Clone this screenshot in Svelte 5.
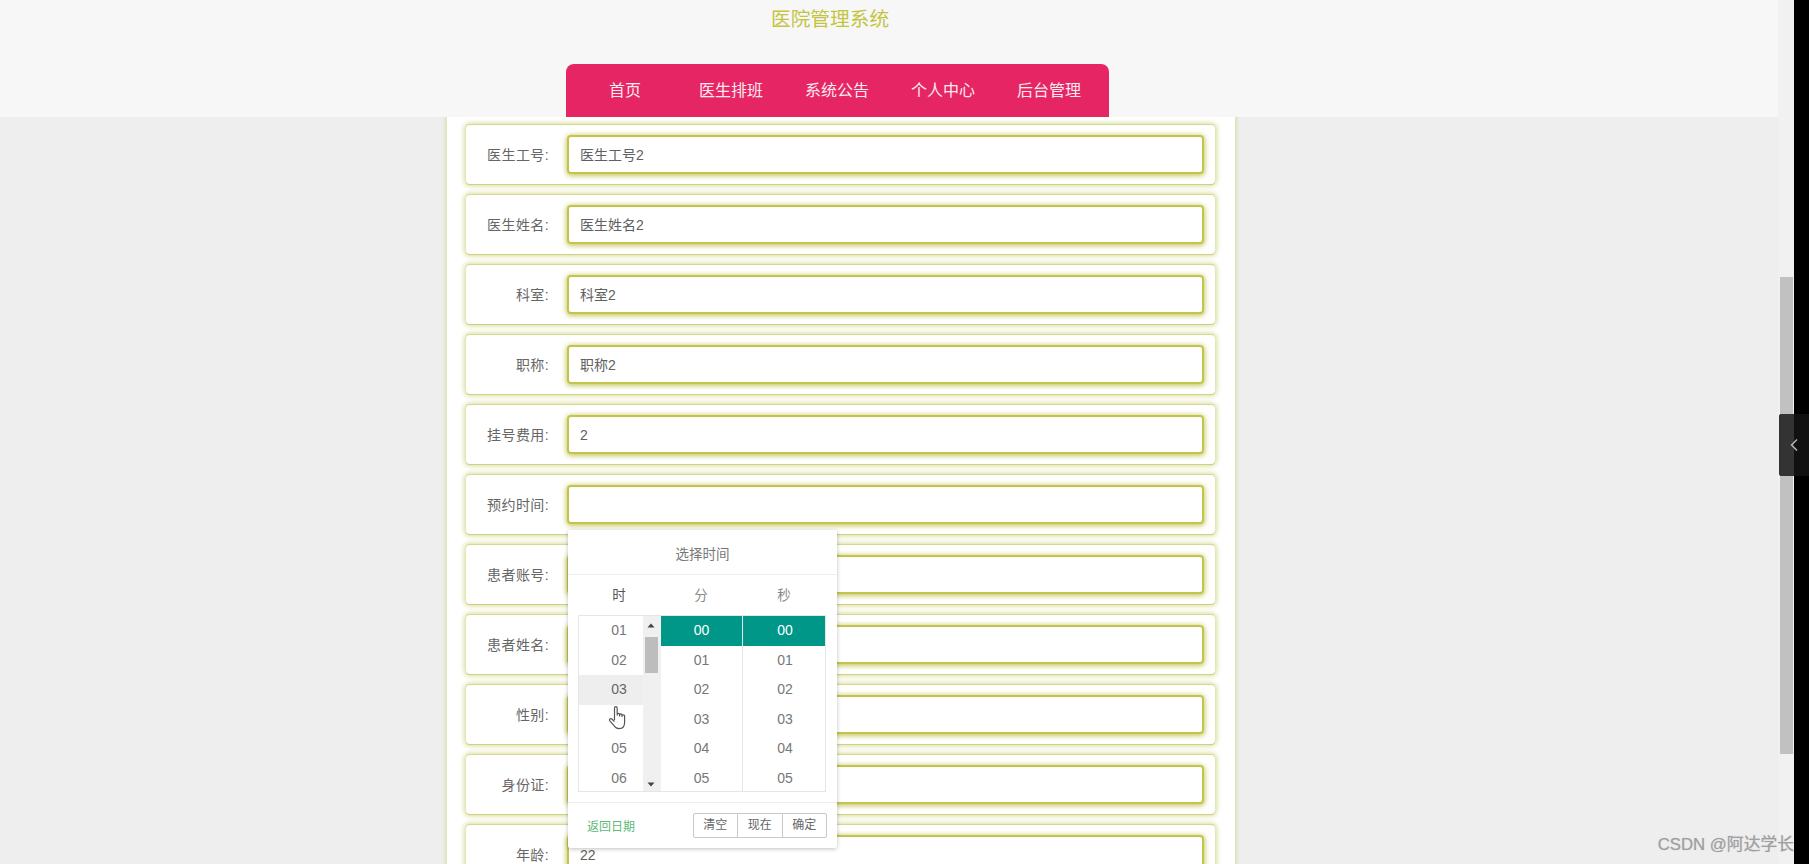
<script>
  const rows = [
    { label: "医生工号", value: "医生工号2" },
    { label: "医生姓名", value: "医生姓名2" },
    { label: "科室", value: "科室2" },
    { label: "职称", value: "职称2" },
    { label: "挂号费用", value: "2" },
    { label: "预约时间", value: "", picker: true },
    { label: "患者账号", value: "" },
    { label: "患者姓名", value: "" },
    { label: "性别", value: "" },
    { label: "身份证", value: "" },
    { label: "年龄", value: "22" },
  ];
  const nav = ["首页", "医生排班", "系统公告", "个人中心", "后台管理"];
  const hours = ["01", "02", "03", "", "05", "06"];
  const minutes = ["00", "01", "02", "03", "04", "05"];
</script>

<div class="page">
  <div class="main">
    <header class="top">
      <div class="title">医院管理系统</div>
      <nav class="nav">
        {#each nav as item}
          <span class="nav-item">{item}</span>
        {/each}
      </nav>
    </header>

    <div class="content">
      <form class="form">
        {#each rows as row}
          <div class="row">
            <span class="label">{row.label}:</span>
            <div class="field">
              <div class="input">{row.value}</div>
              {#if row.picker}
                <div class="picker">
                  <div class="picker-title">选择时间</div>
                  <div class="picker-heads">
                    <span class="strong">时</span>
                    <span>分</span>
                    <span>秒</span>
                  </div>
                  <div class="picker-cols">
                    <div class="col col-hours">
                      <div class="hour-list">
                        {#each hours as h, i}
                          <div class="cell" class:hover={i === 2}>{h}</div>
                        {/each}
                      </div>
                      <div class="mini-bar">
                        <svg class="arrow" width="8" height="5" viewBox="0 0 8 5"><path d="M0.5 4.5L4 0.5L7.5 4.5Z" fill="#444" /></svg>
                        <div class="mini-thumb"></div>
                        <svg class="arrow arrow-down" width="8" height="5" viewBox="0 0 8 5"><path d="M0.5 0.5L4 4.5L7.5 0.5Z" fill="#444" /></svg>
                      </div>
                    </div>
                    <div class="col">
                      {#each minutes as m, i}
                        <div class="cell" class:on={i === 0}>{m}</div>
                      {/each}
                    </div>
                    <div class="col">
                      {#each minutes as s, i}
                        <div class="cell" class:on={i === 0}>{s}</div>
                      {/each}
                    </div>
                  </div>
                  <div class="picker-foot">
                    <span class="back">返回日期</span>
                    <div class="btns">
                      <span>清空</span>
                      <span>现在</span>
                      <span>确定</span>
                    </div>
                  </div>
                  <svg class="hand" width="20" height="25" viewBox="0 0 20 25">
                    <path
                      d="M6.5 15V3.2C6.5 1.2 9.2 1.2 9.2 3.2V10.5M9.2 9.5C9.2 8 11.6 8 11.6 9.5V11.5M11.6 10C11.6 8.6 14 8.6 14 10V12M14 10.8C14 9.6 16.6 9.6 16.6 10.8V17.5C16.6 21 14.6 23.6 11 23.6C8 23.6 6.8 22.2 5.6 20.2L1.8 15.8C0.8 14.4 2.4 13 3.8 14L6.5 16.5"
                      fill="#fff"
                      stroke="#555"
                      stroke-width="1.2"
                      stroke-linejoin="round"
                    />
                  </svg>
                </div>
              {/if}
            </div>
          </div>
        {/each}
      </form>
    </div>
  </div>

  <div class="scrollbar">
    <div class="thumb"></div>
  </div>
  <div class="black"></div>

  <div class="handle">
    <div class="handle-light"></div>
    <svg class="chevron" width="10" height="14" viewBox="0 0 10 14"><path d="M8 1.5L2.5 7L8 12.5" fill="none" stroke="#bbb" stroke-width="1.4" /></svg>
  </div>

  <div class="watermark">CSDN @阿达学长</div>
</div>

<style>
  :global(body) {
    margin: 0;
    background: #000;
    font-family: "Liberation Sans", "Noto Sans CJK SC", sans-serif;
  }

  .page {
    position: relative;
    display: flex;
    width: 1809px;
    height: 864px;
    overflow: hidden;
    background: #000;
  }

  .main {
    width: 1778px;
    height: 864px;
    flex: none;
    background: #eee;
    overflow: hidden;
  }

  .top {
    height: 117px;
    background: #f7f7f7;
    display: flex;
    flex-direction: column;
    align-items: center;
    position: relative;
    z-index: 2;
  }

  .title {
    height: 64px;
    padding-top: 5px;
    box-sizing: border-box;
    margin-left: -116px;
    width: 120px;
    font-size: 19.7px;
    line-height: 28px;
    white-space: nowrap;
    color: #c3c440;
  }

  .nav {
    display: flex;
    width: 543px;
    height: 53px;
    box-sizing: border-box;
    padding-left: 6px;
    margin-left: -103px;
    background: #e62565;
    border-radius: 8px 8px 0 0;
  }

  .nav-item {
    width: 106px;
    text-align: center;
    line-height: 54px;
    font-size: 16px;
    color: #fbeaf0;
  }

  .content {
    display: flex;
    height: 747px;
    padding-left: 447px;
  }

  .form {
    width: 788px;
    box-sizing: border-box;
    padding: 8px 20px 0 19px;
    background: #fff;
    box-shadow: 0 0 3px 2px #dde0b4;
  }

  .row {
    display: flex;
    align-items: center;
    height: 59px;
    margin-bottom: 11px;
    background: #fff;
    border-radius: 4px;
    box-shadow: 0 0 5px 2px #d9dc9a, 0 1px 0 #b8ba42, 0 -1px 0 #d0d27e;
  }

  .label {
    width: 83px;
    flex: none;
    text-align: right;
    font-size: 14px;
    letter-spacing: 0.4px;
    color: #666;
    margin-top: -1px;
  }

  .field {
    position: relative;
    margin: 1px 11px 0 18px;
    flex: 1;
  }

  .input {
    height: 39px;
    margin-bottom: 1px;
    box-sizing: border-box;
    padding: 0 11px 1px 11px;
    line-height: 36px;
    font-size: 14px;
    color: #606060;
    background: #fff;
    border: 2px solid #c2c44c;
    border-radius: 4px;
    box-shadow: 0 1px 5px 1px #c9cb66;
  }

  .picker {
    position: absolute;
    z-index: 1;
    top: 45px;
    left: 1px;
    width: 269px;
    height: 318px;
    background: #fff;
    border-radius: 2px;
    box-shadow: 0 1px 4px rgba(0, 0, 0, 0.25);
    font-size: 14px;
    color: #666;
  }

  .picker-title {
    height: 44px;
    line-height: 50px;
    text-align: center;
    font-size: 13.5px;
    color: #777;
    border-bottom: 1px solid #eee;
  }

  .picker-heads {
    display: grid;
    grid-template-columns: 82px 82px 84px;
    padding-left: 10px;
    height: 40px;
    line-height: 41px;
    text-align: center;
    font-size: 13.5px;
    color: #888;
  }

  .picker-heads .strong {
    color: #555;
  }

  .picker-cols {
    display: grid;
    grid-template-columns: 82px 82px 84px;
    height: 177px;
    margin-left: 10px;
    width: 248px;
    box-sizing: border-box;
    border: 1px solid #e6e6e6;
    overflow: hidden;
  }

  .col {
    border-right: 1px solid #e6e6e6;
    overflow: hidden;
  }

  .col:last-child {
    border-right: 0;
  }

  .col-hours {
    display: flex;
    border-right: 0;
  }

  .hour-list {
    width: 64px;
    flex: none;
  }

  .hour-list .cell {
    padding-left: 16px;
    width: 48px;
  }

  .mini-bar {
    position: relative;
    flex: 1;
    background: #f0f0f0;
  }

  .mini-thumb {
    position: absolute;
    top: 21px;
    left: 2px;
    width: 13px;
    height: 36px;
    background: #bdbdbd;
  }

  .arrow {
    position: absolute;
    top: 7px;
    left: 4px;
  }

  .arrow-down {
    top: 166px;
  }

  .cell {
    height: 29.5px;
    line-height: 29.5px;
    text-align: center;
    font-size: 14px;
    color: #777;
  }

  .cell.hover {
    background: #eee;
    color: #666;
  }

  .cell.on {
    background: #009688;
    color: #fff;
  }

  .picker-foot {
    display: flex;
    align-items: center;
    justify-content: space-between;
    margin-top: 10px;
    height: 45px;
    padding: 0 10px 0 19px;
    border-top: 1px solid #eee;
  }

  .back {
    font-size: 12px;
    color: #5fb878;
  }

  .btns {
    display: flex;
    height: 25px;
    box-sizing: border-box;
    border: 1px solid #c9c9c9;
    border-radius: 2px;
  }

  .btns span {
    width: 43.5px;
    text-align: center;
    line-height: 23px;
    font-size: 12px;
    color: #666;
    border-left: 1px solid #c9c9c9;
  }

  .btns span:first-child {
    border-left: 0;
  }

  .hand {
    position: absolute;
    left: 40px;
    top: 175px;
  }

  .watermark {
    position: absolute;
    right: 15px;
    bottom: 9px;
    font-size: 16.8px;
    color: #a0a0a0;
    text-shadow: 0 0 1px #bbb;
    white-space: nowrap;
  }

  .scrollbar {
    width: 16px;
    flex: none;
    height: 864px;
    background: #f1f1f1;
    box-sizing: border-box;
    padding: 277px 1px 0 2px;
  }

  .thumb {
    height: 477px;
    background: #c1c1c1;
  }

  .black {
    flex: 1;
    background: #000;
  }

  .handle {
    position: absolute;
    top: 414px;
    left: 1779px;
    width: 30px;
    height: 62px;
    background: #111;
    border-radius: 3px 0 0 3px;
    overflow: hidden;
  }

  .handle-light {
    width: 15px;
    height: 62px;
    background: #333;
  }

  .chevron {
    position: absolute;
    top: 24px;
    left: 10px;
  }
</style>
